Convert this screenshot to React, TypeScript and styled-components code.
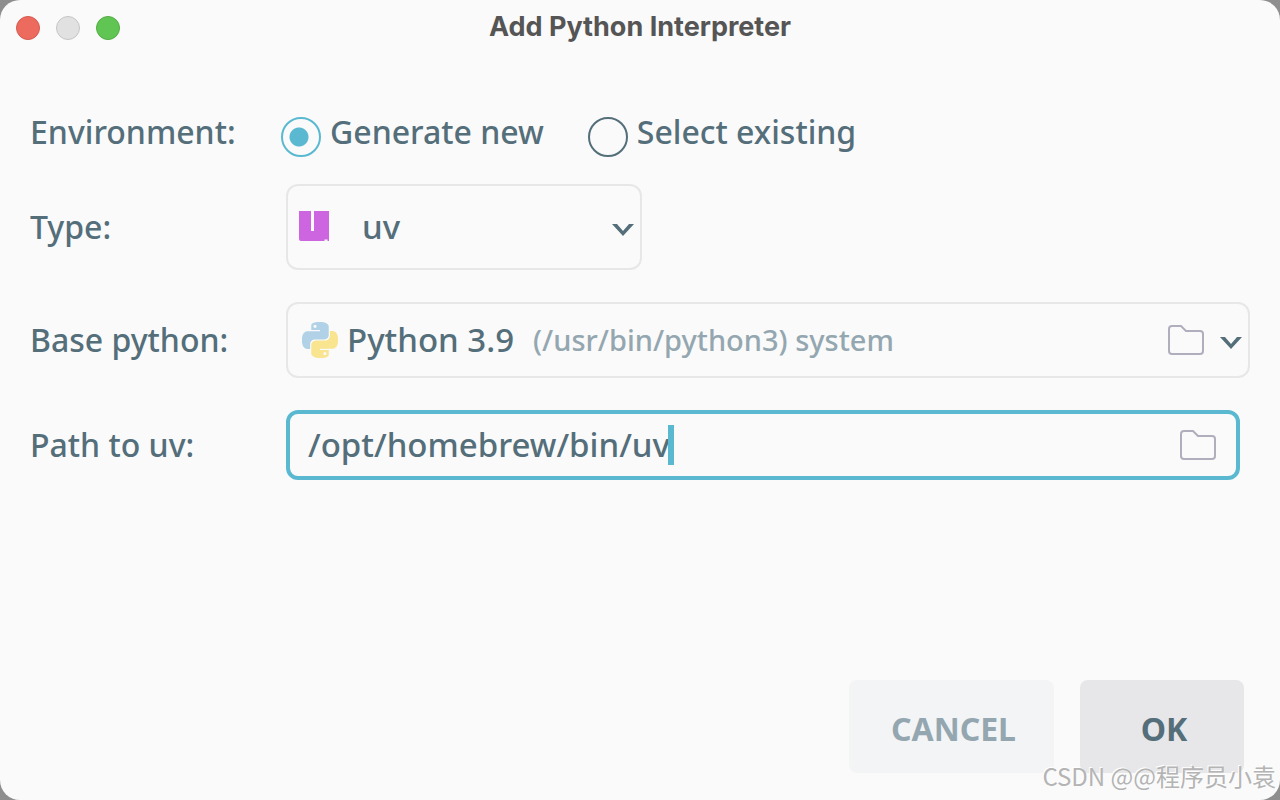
import React, { useState } from "react";
import styled, { createGlobalStyle } from "styled-components";

const color = {
  surface: "#fafafa",
  text: "#546e7a",
  muted: "#94a7b0",
  accent: "#5ab9d0",
  line: "#e7e7e8",
  icon: "#b0aebd",
};

const GlobalStyle = createGlobalStyle`
  *, *::before, *::after { box-sizing: border-box; }
  body {
    margin: 0;
    background: #8e8e8e;
    color: ${color.text};
    font-family: "Noto Sans", "Noto Sans CJK SC", sans-serif;
    font-size: 32px;
    font-weight: 500;
    line-height: 40px;
  }
  button, input, select { font: inherit; color: inherit; }
`;

const Dialog = styled.main`
  position: relative;
  display: flex;
  flex-direction: column;
  min-height: 100vh;
  background: ${color.surface};
  border-radius: 20px;
`;

const TitleBar = styled.header`
  display: grid;
  grid-template-columns: 1fr auto 1fr;
  align-items: center;
  height: 56px;
  padding: 0 16px;
`;

const WindowButtons = styled.div`
  display: flex;
  gap: 16px;
`;

const WindowButton = styled.button<{ $fill: string; $edge: string }>`
  width: 24px;
  height: 24px;
  padding: 0;
  border: 1px solid ${(p) => p.$edge};
  border-radius: 50%;
  background: ${(p) => p.$fill};
`;

const Title = styled.h1`
  margin: 0;
  padding-bottom: 2px;
  color: #555555;
  font-family: Inter, sans-serif;
  font-size: 27px;
  font-weight: 700;
  line-height: 32px;
`;

const Form = styled.form`
  flex: 1;
  display: flex;
  flex-direction: column;
  padding: 56px 30px 27px;
`;

const Fields = styled.div`
  display: flex;
  flex-direction: column;
  gap: 32px;
`;

const Row = styled.div`
  display: grid;
  grid-template-columns: 256px minmax(0, 1fr);
  align-items: center;
`;

const RadioGroup = styled.div`
  display: flex;
  gap: 44px;
  height: 40px;
  margin-left: -5px;
`;

const RadioLabel = styled.label`
  display: flex;
  gap: 9px;
  white-space: nowrap;
`;

const Radio = styled.input`
  appearance: none;
  flex: none;
  width: 40px;
  height: 40px;
  margin: 5px 0 0;
  border: 2px solid ${color.text};
  border-radius: 50%;

  &:checked {
    border-color: ${color.accent};
    background: radial-gradient(circle at 16px 18px, ${color.accent} 9px, transparent 10px);
  }
`;

const Field = styled.div<{ $height: number }>`
  display: flex;
  align-items: center;
  height: ${(p) => p.$height}px;
  border: 2px solid ${color.line};
  border-radius: 12px;
  font-size: 33px;
`;

const TypeField = styled(Field)`
  width: 356px;
  padding: 0 6px 0 11px;
`;

const PythonField = styled(Field)`
  padding: 0 6px 0 14px;
`;

const PathField = styled(Field)`
  margin-right: 10px;
  padding: 0 20px 0 18px;
  border: 4px solid ${color.accent};
`;

const Select = styled.select`
  appearance: none;
  height: 40px;
  margin: 0;
  padding: 0;
  border: 0;
  outline: 0;
  background: transparent;
`;

const TypeSelect = styled(Select)`
  flex: 1;
  padding-left: 31px;
`;

const PythonSelect = styled(Select)`
  padding-left: 9px;
`;

const Detail = styled.span`
  flex: 1;
  padding-left: 18px;
  color: ${color.muted};
  font-size: 29px;
  white-space: nowrap;
`;

const PathText = styled.div`
  flex: 1;
  display: flex;
  align-items: center;
  min-width: 0;
`;

const PathInput = styled.input`
  field-sizing: content;
  min-width: 0;
  height: 40px;
  padding: 0;
  border: 0;
  outline: 0;
  background: transparent;
  caret-color: transparent;
`;

const Caret = styled.span`
  flex: none;
  width: 6px;
  height: 40px;
  margin-left: -2px;
  background: ${color.accent};
`;

const BrowseButton = styled.button`
  display: flex;
  padding: 0;
  border: 0;
  background: transparent;
`;

const PythonBrowse = styled(BrowseButton)`
  margin-right: 16px;
`;

const Actions = styled.footer`
  display: flex;
  justify-content: flex-end;
  gap: 26px;
  margin-top: auto;
  padding-right: 6px;
`;

const ActionButton = styled.button<{ $primary?: boolean }>`
  min-width: 164px;
  height: 93px;
  padding: 4px 38px 0 42px;
  border: 0;
  border-radius: 8px;
  background: ${(p) => (p.$primary ? "#e7e7e9" : "#f3f4f6")};
  color: ${(p) => (p.$primary ? color.text : color.muted)};
  font-size: 32px;
  font-weight: 700;
`;

const Watermark = styled.div`
  position: absolute;
  right: 4px;
  bottom: 8px;
  color: #b4b4b4;
  font-family: "Noto Sans CJK SC", sans-serif;
  font-size: 24px;
  font-weight: 400;
  line-height: 32px;
  text-shadow: -1px -1px 0 #ffffff;
  white-space: nowrap;
  pointer-events: none;
`;

const Chevron = () => (
  <svg width="22" height="18" viewBox="0 0 22 18" fill={color.text} pointerEvents="none" aria-hidden="true">
    <path d="M0 6h5l6 7 6-7h5L11 18z" />
  </svg>
);

const FolderIcon = () => (
  <svg width="36" height="30" viewBox="0 0 36 30" fill="none" stroke={color.icon} strokeWidth="2" aria-hidden="true">
    <path d="M4 1h9l5 5h14a3 3 0 0 1 3 3v17a3 3 0 0 1-3 3H4a3 3 0 0 1-3-3V4a3 3 0 0 1 3-3z" />
  </svg>
);

const UvIcon = () => (
  <svg width="32" height="32" viewBox="0 0 32 32" aria-hidden="true">
    <path
      fill="#ce65e0"
      d="M0 0h12v20h3V0h15v30h-1.500v-1.500h-3V30H2a2 2 0 0 1-2-2z"
    />
  </svg>
);

const PythonIcon = () => (
  <svg width="36" height="36" viewBox="0 0 24 24" aria-hidden="true">
    <path
      fill="#b0d1e6"
      d="M14.25.18l.9.2.73.26.59.3.45.32.34.34.25.34.16.33.1.3.04.26.02.2-.01.13V8.5l-.05.63-.13.55-.21.46-.26.38-.3.31-.33.25-.35.19-.35.14-.33.1-.3.07-.26.04-.21.02H8.77l-.69.05-.59.14-.5.22-.41.27-.33.32-.27.35-.2.36-.15.37-.1.35-.07.32-.04.27-.02.21v3.06H3.17l-.21-.03-.28-.07-.32-.12-.35-.18-.36-.26-.36-.36-.35-.46-.32-.59-.28-.73-.21-.88-.14-1.05-.05-1.23.06-1.22.16-1.04.24-.87.32-.71.36-.57.4-.44.42-.33.42-.24.4-.16.36-.1.32-.05.24-.01h.16l.06.01h8.16v-.83H6.18l-.01-2.75-.02-.37.05-.34.11-.31.17-.28.25-.26.31-.23.38-.2.44-.18.51-.15.58-.12.64-.1.71-.06.77-.04.84-.02 1.27.05zm-6.3 1.98l-.23.33-.08.41.08.41.23.34.33.22.41.09.41-.09.33-.22.23-.34.08-.41-.08-.41-.23-.33-.33-.22-.41-.09-.41.09z"
    />
    <path
      fill="#f9e48f"
      d="M21.04 6.11l.28.06.32.12.35.18.36.27.36.35.35.47.32.59.28.73.21.88.14 1.04.05 1.23-.06 1.23-.16 1.04-.24.86-.32.71-.36.57-.4.45-.42.33-.42.24-.4.16-.36.09-.32.05-.24.02-.16-.01h-8.22v.82h5.84l.01 2.76.02.36-.05.34-.11.31-.17.29-.25.25-.31.24-.38.2-.44.17-.51.15-.58.13-.64.09-.71.07-.77.04-.84.01-1.27-.04-1.07-.14-.9-.2-.73-.25-.59-.3-.45-.33-.34-.34-.25-.34-.16-.33-.1-.3-.04-.25-.02-.2.01-.13v-5.34l.05-.64.13-.54.21-.46.26-.38.3-.32.33-.24.35-.2.35-.14.33-.1.3-.06.26-.04.21-.02.13-.01h5.84l.69-.05.59-.14.5-.21.41-.28.33-.32.27-.35.2-.36.15-.36.1-.35.07-.32.04-.28.02-.21V6.07h2.09l.14.01zm-6.47 14.25l-.23.33-.08.41.08.41.23.33.33.23.41.08.41-.08.33-.23.23-.33.08-.41-.08-.41-.23-.33-.33-.23-.41-.08-.41.08z"
    />
  </svg>
);

export default function App() {
  const [environment, setEnvironment] = useState("new");
  const [path, setPath] = useState("/opt/homebrew/bin/uv");

  return (
    <>
      <GlobalStyle />
      <Dialog>
        <TitleBar>
          <WindowButtons>
            <WindowButton type="button" aria-label="Close" $fill="#ed6a5e" $edge="#d65a4f" />
            <WindowButton type="button" aria-label="Minimize" disabled $fill="#e1e1e1" $edge="#c6c6c6" />
            <WindowButton type="button" aria-label="Zoom" $fill="#61c554" $edge="#51ad42" />
          </WindowButtons>
          <Title>Add Python Interpreter</Title>
        </TitleBar>
        <Form onSubmit={(e) => e.preventDefault()}>
          <Fields>
            <Row role="radiogroup" aria-labelledby="environment">
              <span id="environment">Environment:</span>
              <RadioGroup>
                <RadioLabel>
                  <Radio
                    type="radio"
                    name="environment"
                    checked={environment === "new"}
                    onChange={() => setEnvironment("new")}
                  />
                  Generate new
                </RadioLabel>
                <RadioLabel>
                  <Radio
                    type="radio"
                    name="environment"
                    checked={environment === "existing"}
                    onChange={() => setEnvironment("existing")}
                  />
                  Select existing
                </RadioLabel>
              </RadioGroup>
            </Row>
            <Row>
              <label htmlFor="type">Type:</label>
              <TypeField $height={86}>
                <UvIcon />
                <TypeSelect id="type">
                  <option>uv</option>
                </TypeSelect>
                <Chevron />
              </TypeField>
            </Row>
            <Row>
              <label htmlFor="python">Base python:</label>
              <PythonField $height={76}>
                <PythonIcon />
                <PythonSelect id="python">
                  <option>Python 3.9</option>
                </PythonSelect>
                <Detail>(/usr/bin/python3) system</Detail>
                <PythonBrowse type="button" aria-label="Browse for base python">
                  <FolderIcon />
                </PythonBrowse>
                <Chevron />
              </PythonField>
            </Row>
            <Row>
              <label htmlFor="path">Path to uv:</label>
              <PathField $height={70}>
                <PathText>
                  <PathInput id="path" value={path} onChange={(e) => setPath(e.target.value)} />
                  <Caret />
                </PathText>
                <BrowseButton type="button" aria-label="Browse for uv">
                  <FolderIcon />
                </BrowseButton>
              </PathField>
            </Row>
          </Fields>
          <Actions>
            <ActionButton type="button">CANCEL</ActionButton>
            <ActionButton type="submit" $primary>
              OK
            </ActionButton>
          </Actions>
        </Form>
        <Watermark>CSDN @@程序员小袁</Watermark>
      </Dialog>
    </>
  );
}
